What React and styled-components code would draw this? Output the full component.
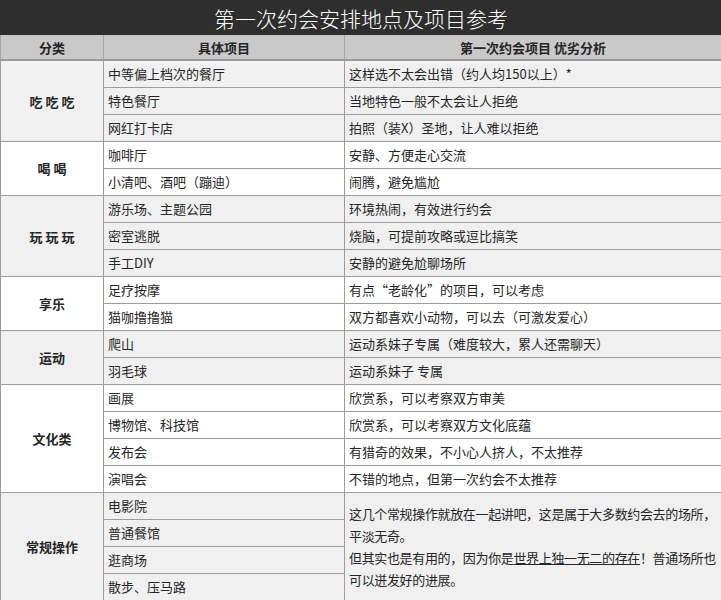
import styled, { createGlobalStyle } from "styled-components"

const groups = [
    {
        name: "吃 吃 吃",
        shade: true,
        rows: [
            ["中等偏上档次的餐厅", "这样选不太会出错（约人均150以上）*"],
            ["特色餐厅", "当地特色一般不太会让人拒绝"],
            ["网红打卡店", "拍照（装X）圣地，让人难以拒绝"]
        ]
    },
    {
        name: "喝 喝",
        rows: [
            ["咖啡厅", "安静、方便走心交流"],
            ["小清吧、酒吧（蹦迪）", "闹腾，避免尴尬"]
        ]
    },
    {
        name: "玩 玩 玩",
        shade: true,
        rows: [
            ["游乐场、主题公园", "环境热闹，有效进行约会"],
            ["密室逃脱", "烧脑，可提前攻略或逗比搞笑"],
            ["手工DIY", "安静的避免尬聊场所"]
        ]
    },
    {
        name: "享乐",
        rows: [
            ["足疗按摩", "有点“老龄化”的项目，可以考虑"],
            ["猫咖撸撸猫", "双方都喜欢小动物，可以去（可激发爱心）"]
        ]
    },
    {
        name: "运动",
        shade: true,
        rows: [
            ["爬山", "运动系妹子专属（难度较大，累人还需聊天）"],
            ["羽毛球", "运动系妹子 专属"]
        ]
    },
    {
        name: "文化类",
        rows: [
            ["画展", "欣赏系，可以考察双方审美"],
            ["博物馆、科技馆", "欣赏系，可以考察双方文化底蕴"],
            ["发布会", "有猎奇的效果，不小心人挤人，不太推荐"],
            ["演唱会", "不错的地点，但第一次约会不太推荐"]
        ]
    }
]

const common = ["电影院", "普通餐馆", "逛商场", "散步、压马路"]

const Global = createGlobalStyle`
body{
    margin:0;
    background:#fff;
    font-family:"Noto Sans CJK SC","Liberation Sans",sans-serif;
}
`

const Sheet = styled.table`
width:721px;
border-collapse:collapse;
table-layout:fixed;
font-size:13px;
color:#262626;
`

const Title = styled.th`
height:33px;
padding:0;
background:#2e2e2e;
color:#fff;
font-size:21px;
font-weight:300;
text-align:center;
border:1px solid #2e2e2e;
`

const Head = styled.th`
height:24px;
padding:0;
background:#c9c9c9;
font-weight:bold;
font-size:13px;
text-align:center;
border:1px solid #a8a8a8;
border-bottom:2px solid #9a9a9a;
`

const Row = styled.tr`
background:${p => p.$shade ? "#f0f0f0" : "#fff"};
`

const Category = styled.td`
padding:0;
font-weight:bold;
text-align:center;
border:1px solid #9c9c9c;
`

const Cell = styled.td`
height:26px;
padding:0 4px;
line-height:18px;
white-space:nowrap;
border:1px solid #9c9c9c;
`

const Note = styled.td`
padding:0 4px;
line-height:22px;
letter-spacing:-0.35px;
white-space:nowrap;
vertical-align:middle;
border:1px solid #9c9c9c;
`

const Mark = styled.span`
text-decoration:underline;
`

export default function App(){
    return(
        <>
            <Global/>
            <Sheet>
                <colgroup>
                    <col style={{width:"103px"}}/>
                    <col style={{width:"241px"}}/>
                    <col style={{width:"377px"}}/>
                </colgroup>
                <thead>
                    <tr><Title colSpan={3}>第一次约会安排地点及项目参考</Title></tr>
                    <tr>
                        <Head>分类</Head>
                        <Head>具体项目</Head>
                        <Head>第一次约会项目 优劣分析</Head>
                    </tr>
                </thead>
                <tbody>
                    {groups.map(g => g.rows.map((r, i) => (
                        <Row key={g.name + i} $shade={g.shade}>
                            {i === 0 && <Category rowSpan={g.rows.length}>{g.name}</Category>}
                            <Cell>{r[0]}</Cell>
                            <Cell>{r[1]}</Cell>
                        </Row>
                    )))}
                    {common.map((item, i) => (
                        <Row key={item} $shade>
                            {i === 0 && <Category rowSpan={4}>常规操作</Category>}
                            <Cell>{item}</Cell>
                            {i === 0 && (
                                <Note rowSpan={4}>
                                    这几个常规操作就放在一起讲吧，这是属于大多数约会去的场所，<br/>
                                    平淡无奇。<br/>
                                    但其实也是有用的，因为你是<Mark>世界上独一无二的存在</Mark>！普通场所也<br/>
                                    可以迸发好的进展。
                                </Note>
                            )}
                        </Row>
                    ))}
                </tbody>
            </Sheet>
        </>
    )
}
